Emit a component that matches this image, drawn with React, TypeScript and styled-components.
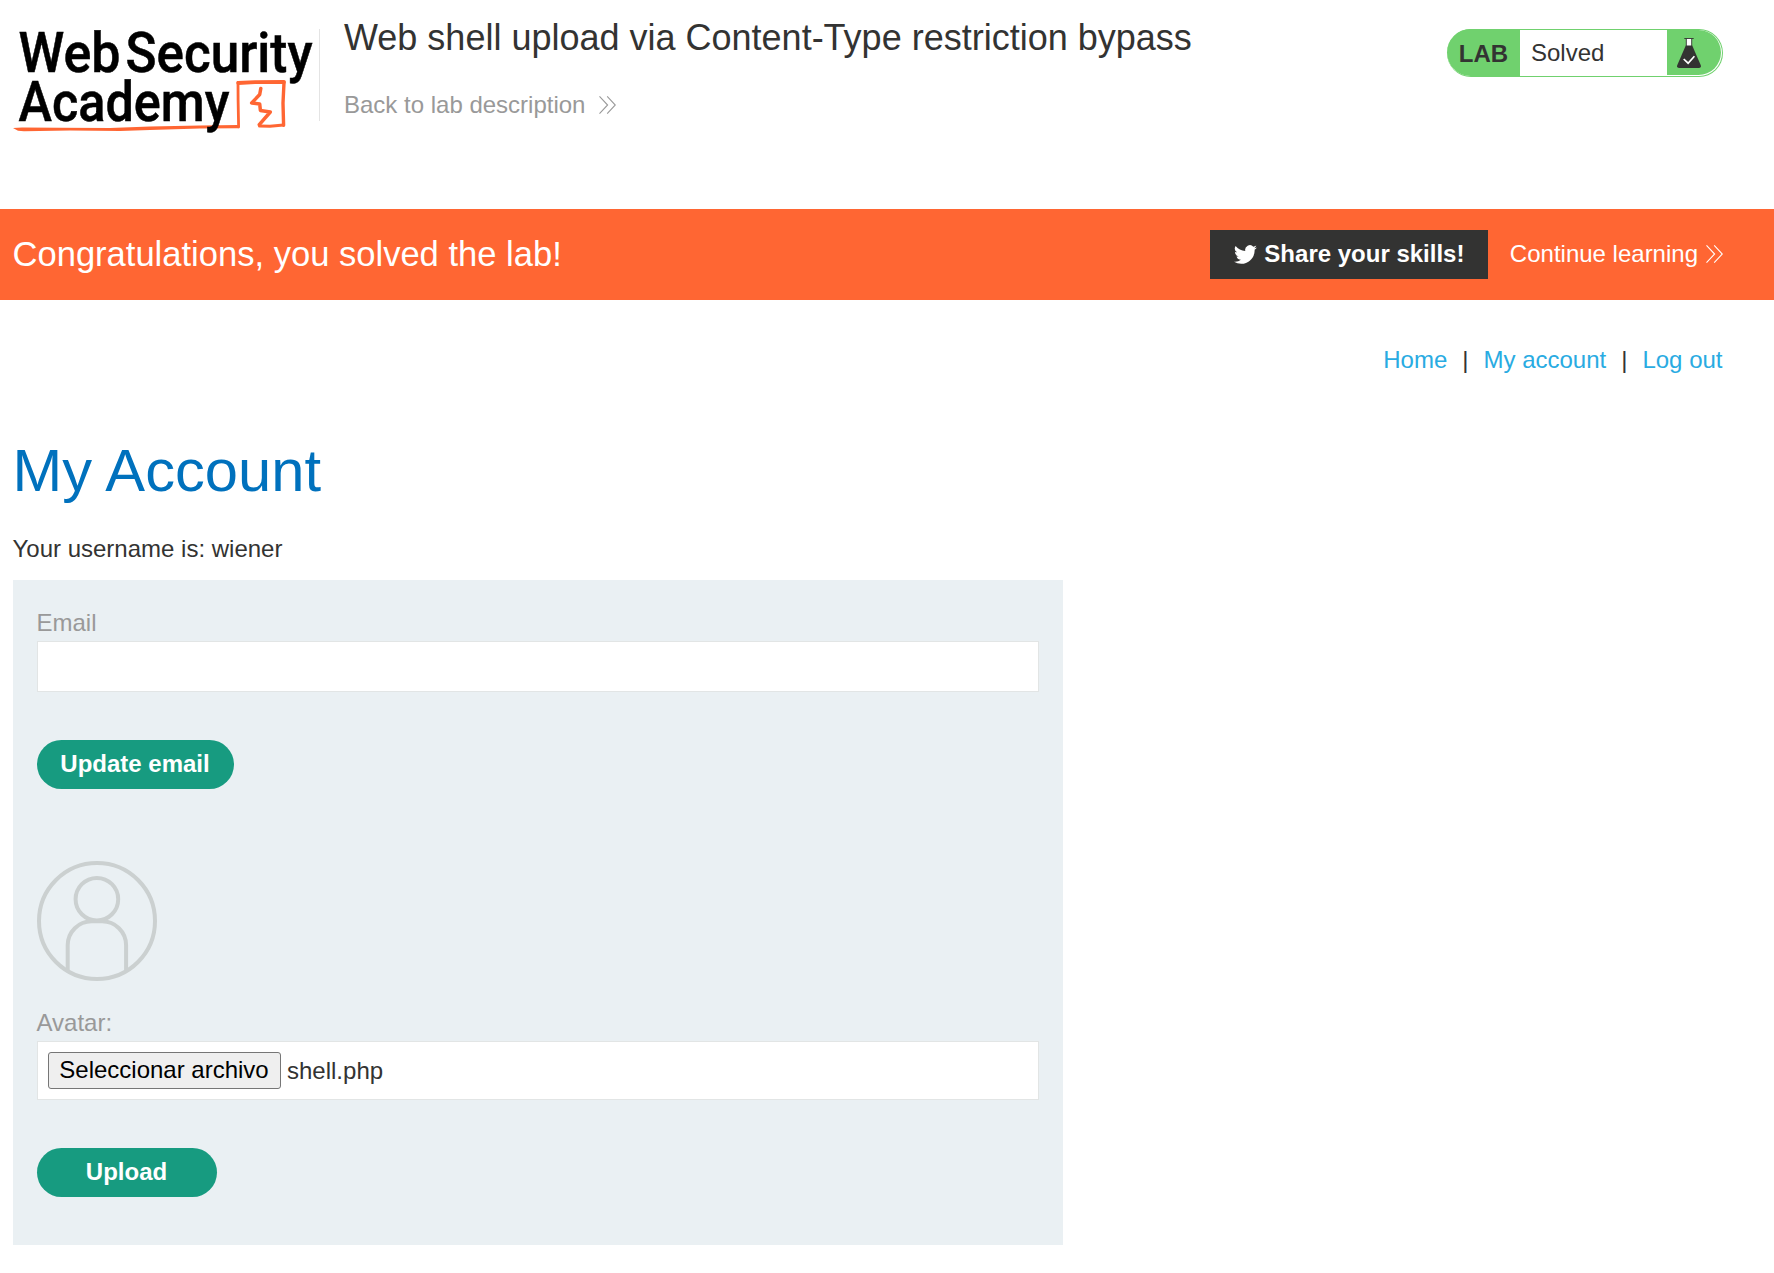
import React from "react";
import styled, { createGlobalStyle } from "styled-components";

const GlobalStyle = createGlobalStyle`
  *, *::before, *::after { box-sizing: border-box; }
  body {
    margin: 0;
    background: #fff;
    color: #333332;
    font-family: "Liberation Sans", Arial, sans-serif;
    font-size: 24px;
    line-height: 36px;
  }
  h1, h2, p { margin: 0; font-weight: 400; }
  a { text-decoration: none; color: inherit; }
`;

const Header = styled.header`
  display: flex;
  align-items: flex-start;
  height: 209px;
  padding: 0 51px 0 13px;
`;

const LogoLink = styled.a`
  display: block;
  flex: none;
  width: 307px;
  height: 92px;
  margin-top: 29px;
  border-right: 1px solid #e4e4e4;
`;

const LogoSvg = styled.svg`
  display: block;
  overflow: visible;
  font-family: Roboto, "Liberation Sans", sans-serif;
  font-size: 55.5px;
  font-weight: 500;
`;

const TitleColumn = styled.div`
  flex: 1;
  display: flex;
  flex-direction: column;
  align-items: flex-start;
  padding: 14px 0 0 24px;
`;

const LabTitle = styled.h2`
  font-size: 36px;
  line-height: 48px;
`;

const BackLink = styled.a`
  display: flex;
  align-items: center;
  gap: 14px;
  margin-top: 25px;
  color: #999;
`;

const Status = styled.div`
  display: flex;
  width: 276px;
  height: 48px;
  margin-top: 29px;
  padding: 0 1px 1px 0;
  border: 1px solid #70d16e;
  border-left: 0;
  border-radius: 24px;
`;

const StatusTag = styled.span`
  width: 73px;
  margin: -1px 0;
  padding: 7px 0 0 11.8px;
  border-radius: 24px 0 0 24px;
  background: #70d16e;
  font-weight: 700;
`;

const StatusText = styled.span`
  flex: 1;
  padding: 5px 0 0 11px;
`;

const StatusIcon = styled.span`
  width: 54px;
  padding: 7px 0 0 10px;
  border-radius: 0 23px 23px 0;
  background: #70d16e;
`;

const Banner = styled.section`
  display: flex;
  align-items: center;
  height: 91px;
  padding: 0 51px 0 12.5px;
  background: #ff6633;
  color: #fff;
`;

const BannerMessage = styled.p`
  flex: 1;
  padding-bottom: 1px;
  font-size: 34.56px;
`;

const ShareButton = styled.button`
  display: flex;
  align-items: center;
  gap: 7.5px;
  width: 278px;
  height: 49px;
  padding: 0 0 1px 24px;
  border: 0;
  background: #333332;
  color: #fff;
  font: inherit;
  font-weight: 700;
`;

const ContinueLink = styled.a`
  display: flex;
  align-items: center;
  gap: 8px;
  margin-left: 22px;
  padding-bottom: 2px;
`;

const Nav = styled.nav`
  display: flex;
  justify-content: flex-end;
  gap: 15px;
  padding: 42px 51.5px 0 0;
`;

const NavLink = styled.a`
  color: #29abe2;
`;

const Main = styled.main`
  padding: 57px 0 0 12.5px;
`;

const PageTitle = styled.h1`
  color: #0071bd;
  font-size: 59.7px;
  line-height: 72px;
`;

const Username = styled.p`
  margin-top: 24px;
`;

const Panel = styled.div`
  width: 1050px;
  height: 665px;
  margin-top: 13px;
  padding: 25px 24px 24px;
  background: #eaf0f3;
`;

const Form = styled.form<{ $offset?: number }>`
  display: flex;
  flex-direction: column;
  align-items: flex-start;
  margin-top: ${(p) => p.$offset ?? 0}px;
`;

const Label = styled.label`
  color: #999;
`;

const EmailInput = styled.input`
  width: 1002px;
  height: 51px;
  padding: 10px;
  border: 1px solid #e2e5e5;
  background: #fff;
  font: inherit;
`;

const FileField = styled.div`
  display: flex;
  align-items: flex-start;
  gap: 6.5px;
  width: 1002px;
  height: 59px;
  padding: 10px;
  border: 1px solid #e2e5e5;
  background: #fff;
`;

const FileButton = styled.button`
  width: 233px;
  height: 37px;
  padding: 0 0 1px;
  border: 1px solid #767676;
  border-radius: 3px;
  background: #efefef;
  color: #000;
  font: inherit;
  line-height: 30px;
`;

const FileName = styled.span`
  padding-top: 1px;
`;

const PillButton = styled.button<{ $width: number }>`
  width: ${(p) => p.$width}px;
  height: 49px;
  margin-top: 48px;
  padding: 0 0 2px;
  border: 0;
  border-radius: 25px;
  background: #179b80;
  color: #fff;
  font: inherit;
  font-weight: 700;
`;

const Icon = styled.svg`
  display: block;
  flex: none;
`;

const Avatar = styled(Icon)`
  margin-bottom: 24px;
`;

const Chevrons = () => (
  <Icon width="17" height="18" viewBox="0 0 17 18" fill="none" stroke="currentColor" strokeWidth="1.1">
    <path d="M.5 .4 8.6 9 .5 17.6M8.2 .4 16.3 9 8.2 17.6" />
  </Icon>
);

const Logo = () => (
  <LogoSvg width="306" height="106" viewBox="13 29 306 106">
    <g stroke="#000" strokeWidth=".5">
      <text x="18.5" y="72" textLength="102" lengthAdjust="spacingAndGlyphs">Web</text>
      <text x="125.5" y="72" textLength="187" lengthAdjust="spacingAndGlyphs">Security</text>
    </g>
    <path fill="#ff6633" d="M13 128 22 127.4 60 127.8 110 128 150 126.4 200 125.6 238 125V128.2L200 128.6 150 130 120 131 70 130.6 24 131.3 18 130.8Z" />
    <g fill="none" stroke="#ff6633" strokeLinejoin="round" strokeLinecap="round">
      <path d="M238.6 127 238.1 100 238 82.3" strokeWidth="2.8" />
      <path d="M238.2 83 255 82.2 284 82" strokeWidth="3.8" />
      <path d="M284 82.5 283 103 283.6 125.3" strokeWidth="3.4" />
      <path d="M260.8 88.5 259.7 94.5 251.7 103 259.7 103.9 260.4 110.4 270.3 112 259.3 124.6" strokeWidth="3.5" />
      <path d="M259.5 126 270 126.2 283.5 125" strokeWidth="3" />
    </g>
    <text x="18.5" y="120.5" textLength="211" lengthAdjust="spacingAndGlyphs" stroke="#000" strokeWidth=".5">Academy</text>
  </LogoSvg>
);

const Flask = () => (
  <Icon width="24" height="32" viewBox="0 0 24 32">
    <path d="M9.3 1.5h5.4V9H9.3z" fill="#fff" />
    <path d="M7.3 1.5h9.4M9.3 1.5v8M14.7 1.5v8" stroke="#333332" strokeWidth=".9" />
    <path d="M8.8 8.6h6.4L23.8 28.2Q24.4 31 22 31H2Q-.4 31 .2 28.2Z" fill="#333332" />
    <path d="m6.7 22 4.4 4.2 6.3-7" fill="none" stroke="#fff" strokeWidth="1.7" />
  </Icon>
);

const Bird = () => (
  <Icon width="23" height="23" viewBox="0 0 24 24" fill="currentColor">
    <path d="M23.95 4.57a10 10 0 0 1-2.82.78 4.96 4.96 0 0 0 2.16-2.73 9.9 9.9 0 0 1-3.12 1.19 4.92 4.92 0 0 0-8.39 4.48A13.93 13.93 0 0 1 1.64 3.16a4.92 4.92 0 0 0 1.52 6.57 4.9 4.9 0 0 1-2.23-.61v.06a4.92 4.92 0 0 0 3.95 4.83 4.99 4.99 0 0 1-2.21.08 4.94 4.94 0 0 0 4.6 3.42A9.87 9.87 0 0 1 0 19.54a13.99 13.99 0 0 0 7.55 2.21c9.05 0 14-7.5 14-13.98 0-.21 0-.42-.02-.63a9.94 9.94 0 0 0 2.42-2.57Z" />
  </Icon>
);

const UserAvatar = () => (
  <Avatar width="120" height="120" viewBox="0 0 120 120" fill="none" stroke="#cbd0d0" strokeWidth="4">
    <circle cx="60" cy="60" r="58" />
    <circle cx="59.9" cy="38.2" r="21.3" />
    <path d="M30.7 109V84A24 24 0 0 1 54.7 60.3H65.1A24 24 0 0 1 89.1 84V109" />
  </Avatar>
);

export default function App() {
  return (
    <>
      <GlobalStyle />
      <Header>
        <LogoLink href="#"><Logo /></LogoLink>
        <TitleColumn>
          <LabTitle>Web shell upload via Content-Type restriction bypass</LabTitle>
          <BackLink href="#">Back to lab description <Chevrons /></BackLink>
        </TitleColumn>
        <Status>
          <StatusTag>LAB</StatusTag>
          <StatusText>Solved</StatusText>
          <StatusIcon><Flask /></StatusIcon>
        </Status>
      </Header>
      <Banner>
        <BannerMessage>Congratulations, you solved the lab!</BannerMessage>
        <ShareButton type="button"><Bird />Share your skills!</ShareButton>
        <ContinueLink href="#">Continue learning <Chevrons /></ContinueLink>
      </Banner>
      <Nav>
        <NavLink href="#">Home</NavLink>
        <span>|</span>
        <NavLink href="#">My account</NavLink>
        <span>|</span>
        <NavLink href="#">Log out</NavLink>
      </Nav>
      <Main>
        <PageTitle>My Account</PageTitle>
        <Username>Your username is: wiener</Username>
        <Panel>
          <Form>
            <Label htmlFor="email">Email</Label>
            <EmailInput id="email" type="email" />
            <PillButton type="button" $width={197}>Update email</PillButton>
          </Form>
          <Form $offset={72}>
            <UserAvatar />
            <Label>Avatar:</Label>
            <FileField>
              <FileButton type="button">Seleccionar archivo</FileButton>
              <FileName>shell.php</FileName>
            </FileField>
            <PillButton type="button" $width={180}>Upload</PillButton>
          </Form>
        </Panel>
      </Main>
    </>
  );
}
